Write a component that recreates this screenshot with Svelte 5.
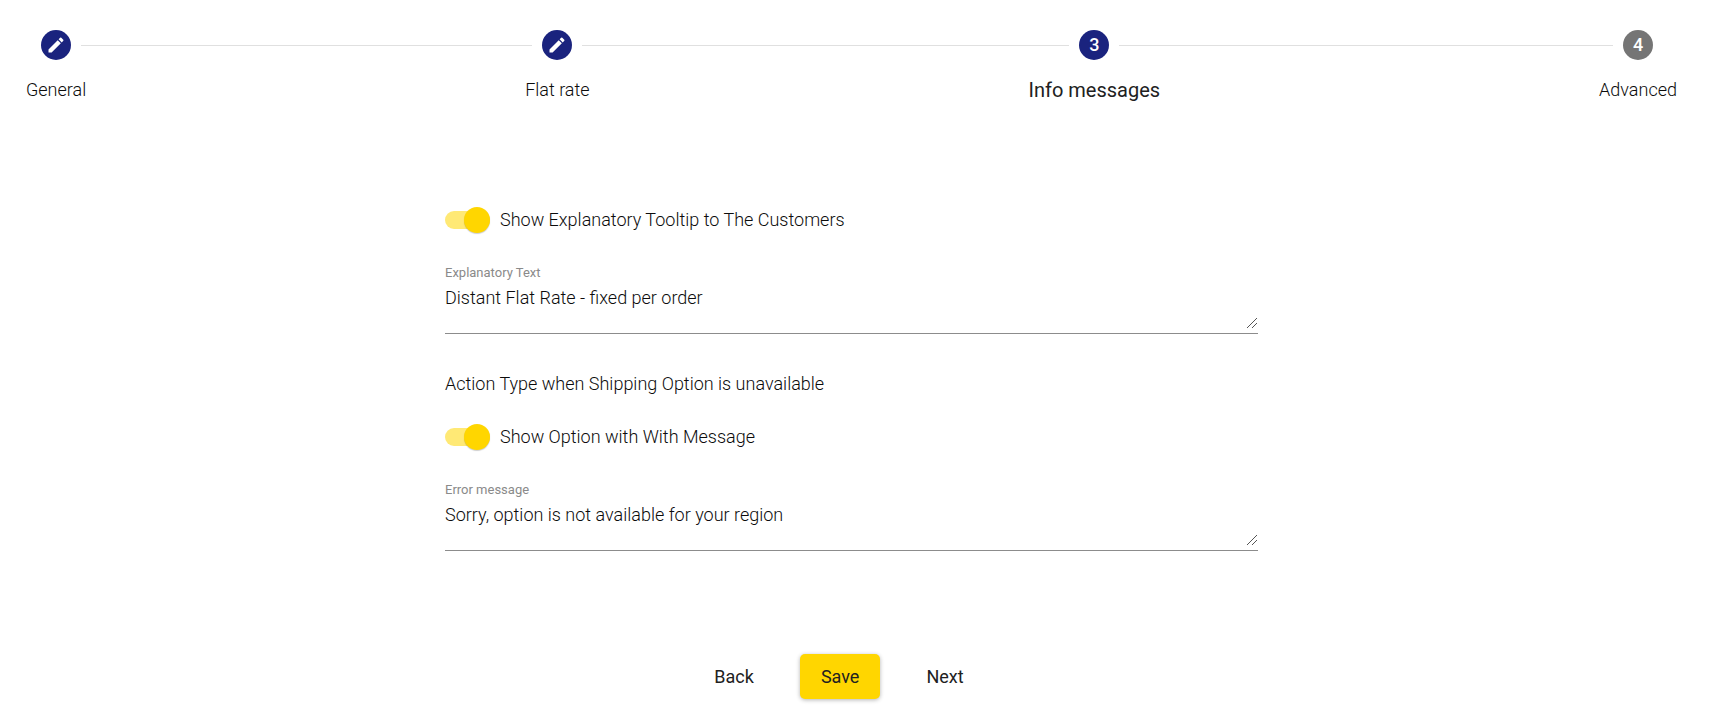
<script>
  let current = 2;
  let showTooltip = true;
  let showOption = true;
  let explanatoryText = 'Distant Flat Rate - fixed per order';
  let errorMessage = 'Sorry, option is not available for your region';

  const steps = [
    { label: 'General', done: true },
    { label: 'Flat rate', done: true },
    { label: 'Info messages', done: false },
    { label: 'Advanced', done: false }
  ];

  function go(delta) {
    current = Math.min(steps.length - 1, Math.max(0, current + delta));
  }
</script>

<div class="stepper">
  <nav class="steps" aria-label="Steps">
    {#each steps as step, i}
      {#if i > 0}
        <span class="connector"></span>
      {/if}
      <button
        class="step"
        class:active={i === current}
        class:done={step.done}
        on:click={() => (current = i)}
      >
        <span class="marker">
          <span class="line" class:hidden={i === 0}></span>
          <span class="circle">
            {#if step.done && i !== current}
              <svg viewBox="0 0 24 24" aria-hidden="true">
                <path d="M3 17.25V21h3.75L17.81 9.94l-3.75-3.75L3 17.25zM20.71 7.04a.996.996 0 0 0 0-1.41l-2.34-2.34a.996.996 0 0 0-1.41 0l-1.83 1.83 3.75 3.75 1.83-1.83z" />
              </svg>
            {:else}
              {i + 1}
            {/if}
          </span>
          <span class="line" class:hidden={i === steps.length - 1}></span>
        </span>
        <span class="step-label">{step.label}</span>
      </button>
    {/each}
  </nav>

  <form on:submit|preventDefault>
    <div class="fields">
      <label class="toggle">
        <input type="checkbox" role="switch" bind:checked={showTooltip} />
        <span>Show Explanatory Tooltip to The Customers</span>
      </label>

      <div class="field">
        <label for="explanatory">Explanatory Text</label>
        <textarea id="explanatory" rows="2" spellcheck="false" bind:value={explanatoryText}></textarea>
        <svg class="grip" viewBox="0 0 10 10" aria-hidden="true">
          <path d="M0 10L10 0M5 10l5-5" />
        </svg>
      </div>

      <p>Action Type when Shipping Option is unavailable</p>

      <label class="toggle">
        <input type="checkbox" role="switch" bind:checked={showOption} />
        <span>Show Option with With Message</span>
      </label>

      <div class="field">
        <label for="error">Error message</label>
        <textarea id="error" rows="2" spellcheck="false" bind:value={errorMessage}></textarea>
        <svg class="grip" viewBox="0 0 10 10" aria-hidden="true">
          <path d="M0 10L10 0M5 10l5-5" />
        </svg>
      </div>
    </div>

    <div class="actions">
      <button type="button" on:click={() => go(-1)}>Back</button>
      <button type="submit" class="primary">Save</button>
      <button type="button" on:click={() => go(1)}>Next</button>
    </div>
  </form>
</div>

<style>
  :global(body) {
    background: #fff;
  }

  .stepper {
    padding: 30px 13px 22px 2px;
    font-family: Roboto, "Liberation Sans", sans-serif;
    font-size: 18px;
    font-weight: 300;
    line-height: 24px;
    color: #0c0c0c;
  }

  button,
  textarea {
    font: inherit;
    color: inherit;
    background: none;
    border: none;
  }

  button {
    cursor: pointer;
  }

  .steps {
    display: flex;
    align-items: flex-start;
  }

  .connector {
    flex: 1;
    height: 1px;
    margin-top: 15px;
    background: #e0e0e0;
  }

  .step {
    display: flex;
    flex-direction: column;
    gap: 18px;
    padding: 0;
  }

  .marker {
    display: flex;
    align-items: center;
    gap: 10px;
    width: 100%;
  }

  .line {
    flex: 1;
    height: 1px;
    background: #e0e0e0;
  }

  .line.hidden {
    visibility: hidden;
  }

  .circle {
    display: flex;
    align-items: center;
    justify-content: center;
    width: 30px;
    height: 30px;
    border-radius: 50%;
    background: #757575;
    color: #fff;
    font-weight: 500;
  }

  .done .circle,
  .active .circle {
    background: #1a237e;
  }

  .circle svg {
    width: 20px;
    height: 20px;
    fill: currentColor;
  }

  .step-label {
    padding: 0 24px;
    white-space: nowrap;
  }

  .active .step-label {
    font-size: 20px;
    font-weight: 400;
    color: #212121;
  }

  .fields {
    max-width: 813px;
    margin: 105px auto 0;
  }

  .toggle {
    display: flex;
    align-items: center;
    gap: 10px;
    height: 26px;
    cursor: pointer;
  }

  .toggle input {
    position: relative;
    appearance: none;
    width: 45px;
    height: 18px;
    margin: 0;
    border-radius: 9px;
    background: rgba(0, 0, 0, 0.38);
    cursor: pointer;
  }

  .toggle input::before {
    content: '';
    position: absolute;
    top: -4px;
    left: 0;
    width: 26px;
    height: 26px;
    border-radius: 50%;
    background: #fafafa;
    box-shadow: 0 1px 1px rgba(0, 0, 0, 0.2);
  }

  .toggle input:checked {
    background: #ffe975;
  }

  .toggle input:checked::before {
    left: 19px;
    background: #ffd600;
  }

  .field {
    position: relative;
    display: flex;
    flex-direction: column;
    margin-top: 32px;
    border-bottom: 1px solid #8c8c8c;
  }

  .field label {
    font-size: 13px;
    font-weight: 400;
    line-height: 16px;
    color: #8a8a8a;
  }

  .field textarea {
    display: block;
    height: 44px;
    margin: 5px 0 3px;
    padding: 0;
    line-height: 24px;
    resize: vertical;
    outline: none;
  }

  .field textarea::-webkit-resizer {
    background: transparent;
  }

  .grip {
    position: absolute;
    right: 1px;
    bottom: 5px;
    width: 10px;
    height: 10px;
    fill: none;
    stroke: #555;
    pointer-events: none;
  }

  .fields p {
    margin: 38px 0 28px;
  }

  .actions {
    display: flex;
    justify-content: center;
    margin-top: 103px;
  }

  .actions button {
    height: 45px;
    padding: 0 21px;
    margin-right: 25px;
    border-radius: 5px;
    font-weight: 400;
    color: #212121;
  }

  .actions .primary {
    background: #ffd600;
    box-shadow: 0 1px 4px rgba(0, 0, 0, 0.3);
  }
</style>
